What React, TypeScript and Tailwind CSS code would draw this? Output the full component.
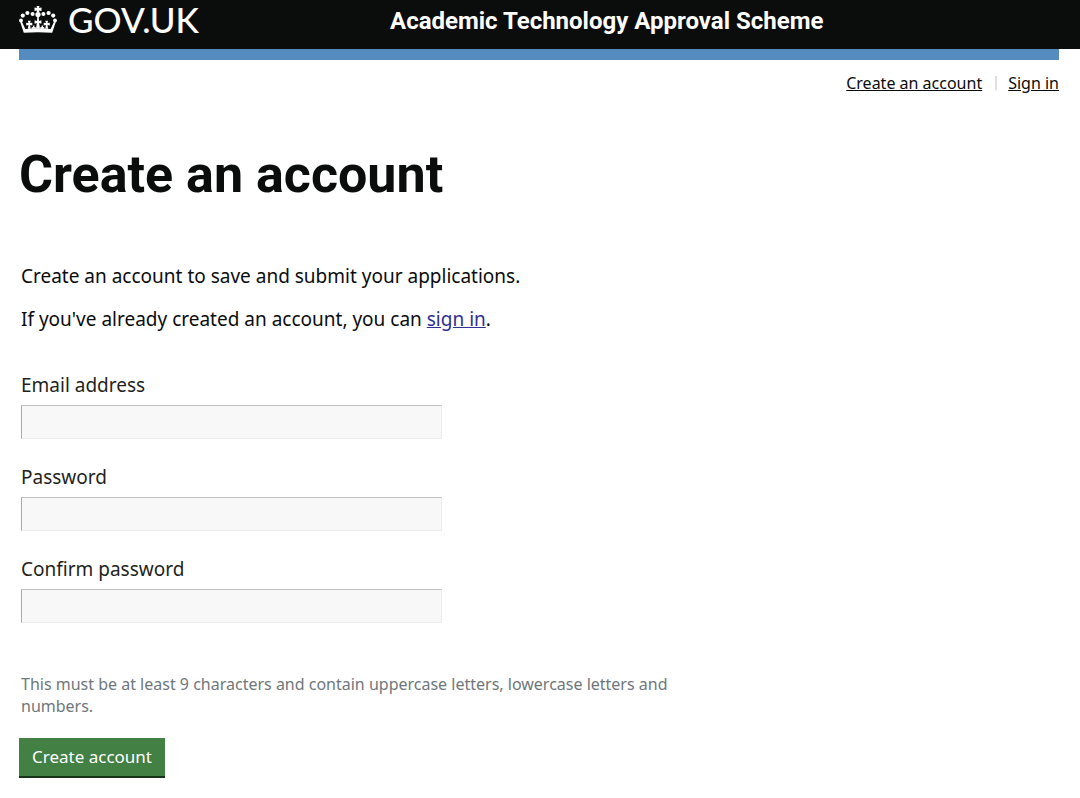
import { useState } from 'react'

interface FieldProps {
  id: string
  label: string
  type: string
  value: string
  onChange: (value: string) => void
}

export default function App() {
  const [email, setEmail] = useState('')
  const [password, setPassword] = useState('')
  const [confirm, setConfirm] = useState('')

  return (
    <div className="bg-white text-[#0b0c0c] font-['Noto_Sans',sans-serif] text-[19px] leading-6">
      {/* Header */}
      <header className="bg-[#0b0c0c] text-white">
        <div className="mx-[19px] flex h-[49px] items-start">
          <a href="#" className="flex w-[371px] shrink-0 items-start gap-[11px] pt-[5px]">
            <Crown />
            <span className="font-['Lato',sans-serif] text-[35px] font-medium leading-[29px]">GOV.UK</span>
          </a>
          <a href="#" className="pt-[5px] font-['Roboto',sans-serif] text-[24px] font-bold leading-8">
            Academic Technology Approval Scheme
          </a>
        </div>
      </header>

      <div className="ml-[19px] mr-[21px] border-t-[11px] border-[#568bbf]">
        <nav className="flex items-center justify-end pt-[11px] text-base leading-6">
          <a href="#" className="underline">Create an account</a>
          <span className="ml-[13px] mr-[11px] h-[14px] w-[2px] bg-[#dee0e2]" />
          <a href="#" className="underline">Sign in</a>
        </nav>

        <main>
          <h1 className="mt-[50px] font-['Roboto',sans-serif] text-[52px] font-bold leading-[60px]">Create an account</h1>

          <div className="ml-[2px] mt-[59px]">
            <p>Create an account to save and submit your applications.</p>
            <p className="mt-[19px]">
              If you've already created an account, you can{' '}
              <a href="#" className="text-[#2e3191] underline">sign in</a>.
            </p>
          </div>

          <form className="mt-[42px]" onSubmit={e => e.preventDefault()}>
            <div className="ml-[2px] max-w-[421px] space-y-[26px]">
              <Field id="email" label="Email address" type="email" value={email} onChange={setEmail} />
              <Field id="password" label="Password" type="password" value={password} onChange={setPassword} />
              <Field id="confirm" label="Confirm password" type="password" value={confirm} onChange={setConfirm} />
            </div>

            <p className="ml-[2px] mt-[50px] max-w-[660px] text-base leading-[22px] text-[#6f777b]">
              This must be at least 9 characters and contain uppercase letters, lowercase letters and numbers.
            </p>

            <button
              type="submit"
              className="mt-[21px] h-10 border-b-2 border-[#173418] bg-[#428044] px-[13px] text-[17px] leading-6 text-white hover:bg-[#36703a]"
            >
              Create account
            </button>
          </form>
        </main>
      </div>
    </div>
  )
}

function Field({ id, label, type, value, onChange }: FieldProps) {
  return (
    <div>
      <label htmlFor={id} className="block text-[#231f20]">{label}</label>
      <input
        id={id}
        type={type}
        value={value}
        onChange={e => onChange(e.target.value)}
        className="mt-2 block h-[34px] w-full border border-[#ebebeb] border-l-[#a9a9a9] border-t-[#c0c0c0] bg-[#f8f8f8] px-2"
      />
    </div>
  )
}

function Crown() {
  return (
    <svg className="h-7 w-[38px]" viewBox="0 0 38 28" fill="#fff" aria-hidden="true">
      {/* cross and orb */}
      <path d="M17.5 1h3l-.5 2 2.5-.4v3.3l-2.5-.4.4 2h-2.8l.4-2-2.5.4V2.6l2.5.4z" />
      <circle cx="19" cy="9.500" r="2.600" />
      {/* pearls */}
      <circle cx="13.600" cy="9" r="2" />
      <circle cx="24.400" cy="9" r="2" />
      <circle cx="8.400" cy="8" r="2.100" />
      <circle cx="29.600" cy="8" r="2.100" />
      <circle cx="3.800" cy="10.600" r="2.100" />
      <circle cx="34.200" cy="10.600" r="2.100" />
      <circle cx="2" cy="15.400" r="1.900" />
      <circle cx="36" cy="15.400" r="1.900" />
      {/* sides and band */}
      <path d="M1.200 17l1.600-.5 3.600 7.500Q19 22.400 31.600 24l3.600-7.500 1.600.5-3.600 10.800Q19 26.500 4.800 27.800z" />
      {/* centre cross */}
      <path d="M18.300 11h1.400l.3 5 2.400-.8v3.600l-2.300-.7.9 5.400h-4l.9-5.400-2.300.7v-3.600l2.400.8z" />
      {/* side crosses */}
      <path d="M8.900 15.800h2.800l-.6 2.300 2.200-.4v2.700l-2.200-.5.6 3.900H8.900l.6-3.900-2.300.5v-2.700l2.300.4z" />
      <path d="M26.300 15.800h2.800l-.6 2.300 2.300-.4v2.700l-2.300-.5.6 3.900h-2.800l.6-3.900-2.200.5v-2.700l2.200.4z" />
      {/* fleurs between the crosses */}
      <path d="M13.900 20.500h1.600l-.2 1.500 1.500.3v1.500h-4.200v-1.500l1.500-.3zM22.500 20.500h1.600l-.2 1.500 1.500.3v1.500h-4.200v-1.500l1.500-.3z" />
    </svg>
  )
}
